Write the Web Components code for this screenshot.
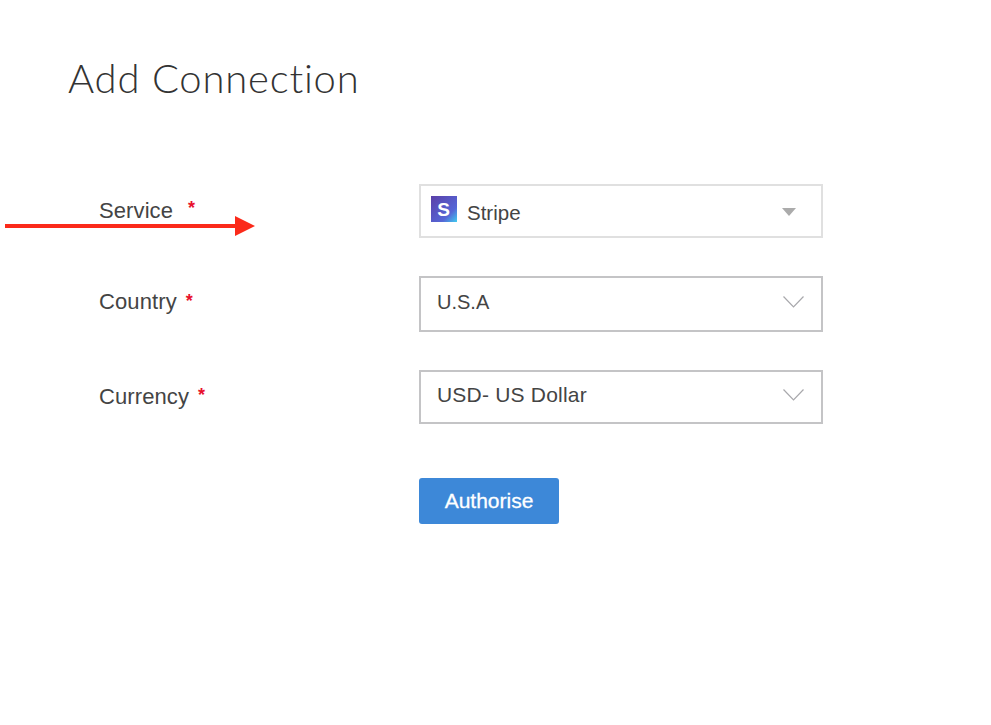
<!DOCTYPE html>
<html>
<head>
<meta charset="utf-8">
<title>Add Connection</title>
<style>
html, body { margin: 0; background: #fff; }
body { width: 991px; height: 725px; overflow: hidden; position: relative; font-family: "Liberation Sans", Arial, sans-serif; }
</style>
</head>
<body>
<connection-page></connection-page>
<script>
class FormRow extends HTMLElement {
  static get observedAttributes() {
    return ['label', 'gap'];
  }

  attributeChangedCallback(attrName, oldVal, newVal) {
    switch (attrName) {
      case 'label':
        this.$label.textContent = newVal;
        break;
      case 'gap':
        this.$star.style.marginLeft = newVal + 'px';
        break;
    }
  }

  constructor() {
    super();
    const root = this.attachShadow({ mode: 'open' });
    root.appendChild(rowTemplate.content.cloneNode(true));
    this.$label = root.querySelector('.text');
    this.$star = root.querySelector('.star');
  }
}

const rowTemplate = document.createElement('template');
rowTemplate.innerHTML = `
<style>
:host {
  display: grid;
  grid-template-columns: 320px 404px;
  align-items: start;
}
.label {
  display: flex;
  align-items: flex-start;
  padding-top: var(--label-top, 14px);
  font-size: 22px;
  line-height: 26px;
  letter-spacing: .1px;
  color: #444;
}
.star {
  color: #e8112d;
  font-size: 18px;
  font-weight: bold;
  line-height: 20px;
  margin-left: 9px;
  padding-top: var(--star-top, 2px);
}
</style>
<div class="label"><span class="text"></span><span class="star">*</span></div>
<div><slot></slot></div>
`;
customElements.define('form-row', FormRow);

class SelectBox extends HTMLElement {
  constructor() {
    super();
    const root = this.attachShadow({ mode: 'open' });
    root.appendChild(selectTemplate.content.cloneNode(true));
    if (this.hasAttribute('solid')) {
      root.querySelector('.chevron').style.display = 'none';
    } else {
      root.querySelector('.solid').style.display = 'none';
    }
  }
}

const selectTemplate = document.createElement('template');
selectTemplate.innerHTML = `
<style>
:host {
  display: flex;
  box-sizing: border-box;
  width: 404px;
  height: var(--box-height, 54px);
  align-items: center;
  padding: 0 17px 4px 16px;
  border: 2px solid var(--box-border, #c4c4c6);
  font-size: var(--box-font, 20px);
  letter-spacing: var(--box-spacing, 0);
  color: #444;
  background: #fff;
}
.value {
  flex: 1;
  display: flex;
  align-items: center;
}
svg { display: block; }
.solid { margin: 6px 8px 0 0; }
</style>
<div class="value"><slot></slot></div>
<svg class="solid" width="14" height="8" viewBox="0 0 14 8"><path d="M0 0h14L7 8z" fill="#ababab"/></svg>
<svg class="chevron" width="21" height="12" viewBox="0 0 21 12"><path d="M.5.5 10.5 11 20.5.5" fill="none" stroke="#a8a8ac" stroke-width="1.2"/></svg>
`;
customElements.define('select-box', SelectBox);

class StripeLogo extends HTMLElement {
  constructor() {
    super();
    this.attachShadow({ mode: 'open' }).innerHTML = `
<style>
:host { display: block; width: 26px; height: 26px; }
svg { display: block; }
text { font: bold 19px "Liberation Sans", sans-serif; fill: #fff; }
</style>
<svg width="26" height="26" viewBox="0 0 26 26">
  <defs>
    <linearGradient id="g" x1="0" y1="0" x2="1" y2="1">
      <stop offset="0" stop-color="#5b3fa8"/>
      <stop offset=".7" stop-color="#5566d6"/>
      <stop offset="1" stop-color="#3fcdf0"/>
    </linearGradient>
  </defs>
  <rect width="26" height="26" fill="url(#g)"/>
  <text x="12.5" y="20" text-anchor="middle">S</text>
</svg>`;
  }
}
customElements.define('stripe-logo', StripeLogo);

class ActionButton extends HTMLElement {
  constructor() {
    super();
    this.attachShadow({ mode: 'open' }).innerHTML = `
<style>
:host {
  display: flex;
  width: 140px;
  height: 46px;
  align-items: center;
  justify-content: center;
  border-radius: 3px;
  background: #3d88d8;
  color: #fff;
  font-size: 21px;
  -webkit-text-stroke: .3px #fff;
}
</style>
<slot></slot>`;
  }
}
customElements.define('action-button', ActionButton);

class ArrowMark extends HTMLElement {
  constructor() {
    super();
    this.attachShadow({ mode: 'open' }).innerHTML = `
<style>
:host { position: absolute; left: 5px; top: 216px; width: 250px; height: 20px; }
svg { display: block; }
</style>
<svg width="250" height="20" viewBox="0 0 250 20"><path d="M0 8h230V0l20 10-20 10v-8H0z" fill="#fb2a1a"/></svg>`;
  }
}
customElements.define('arrow-mark', ArrowMark);

class ConnectionPage extends HTMLElement {
  constructor() {
    super();
    this.attachShadow({ mode: 'open' }).innerHTML = `
<style>
:host {
  display: block;
  padding: 55px 0 0 99px;
  font-family: "Liberation Sans", Arial, sans-serif;
}
h1 {
  margin: 0 0 82px -31px;
  font: 300 40px/47px Lato, sans-serif;
  letter-spacing: .8px;
  color: #333;
}
form-row { margin-bottom: 38px; }
form-row.short { margin-bottom: 54px; }
.stripe { display: flex; align-items: center; gap: 10px; font-size: 20.5px; margin-left: -6px; }
.stripe span { padding-top: 7px; }
.first { --box-border: #e0e0e0; --label-top: 14px; --star-top: 0px; }
.tall { --box-height: 56px; --label-top: 13px; }
.short { --box-font: 21px; --box-spacing: .2px; --star-top: 1px; }
.actions { margin-left: 320px; }
</style>
<h1>Add Connection</h1>
<form-row class="first" label="Service" gap="15">
  <select-box solid>
    <div class="stripe"><stripe-logo></stripe-logo><span>Stripe</span></div>
  </select-box>
</form-row>
<form-row class="tall" label="Country">
  <select-box>U.S.A</select-box>
</form-row>
<form-row class="short" label="Currency">
  <select-box>USD- US Dollar</select-box>
</form-row>
<div class="actions"><action-button>Authorise</action-button></div>
<arrow-mark></arrow-mark>`;
  }
}
customElements.define('connection-page', ConnectionPage);
</script>
</body>
</html>
